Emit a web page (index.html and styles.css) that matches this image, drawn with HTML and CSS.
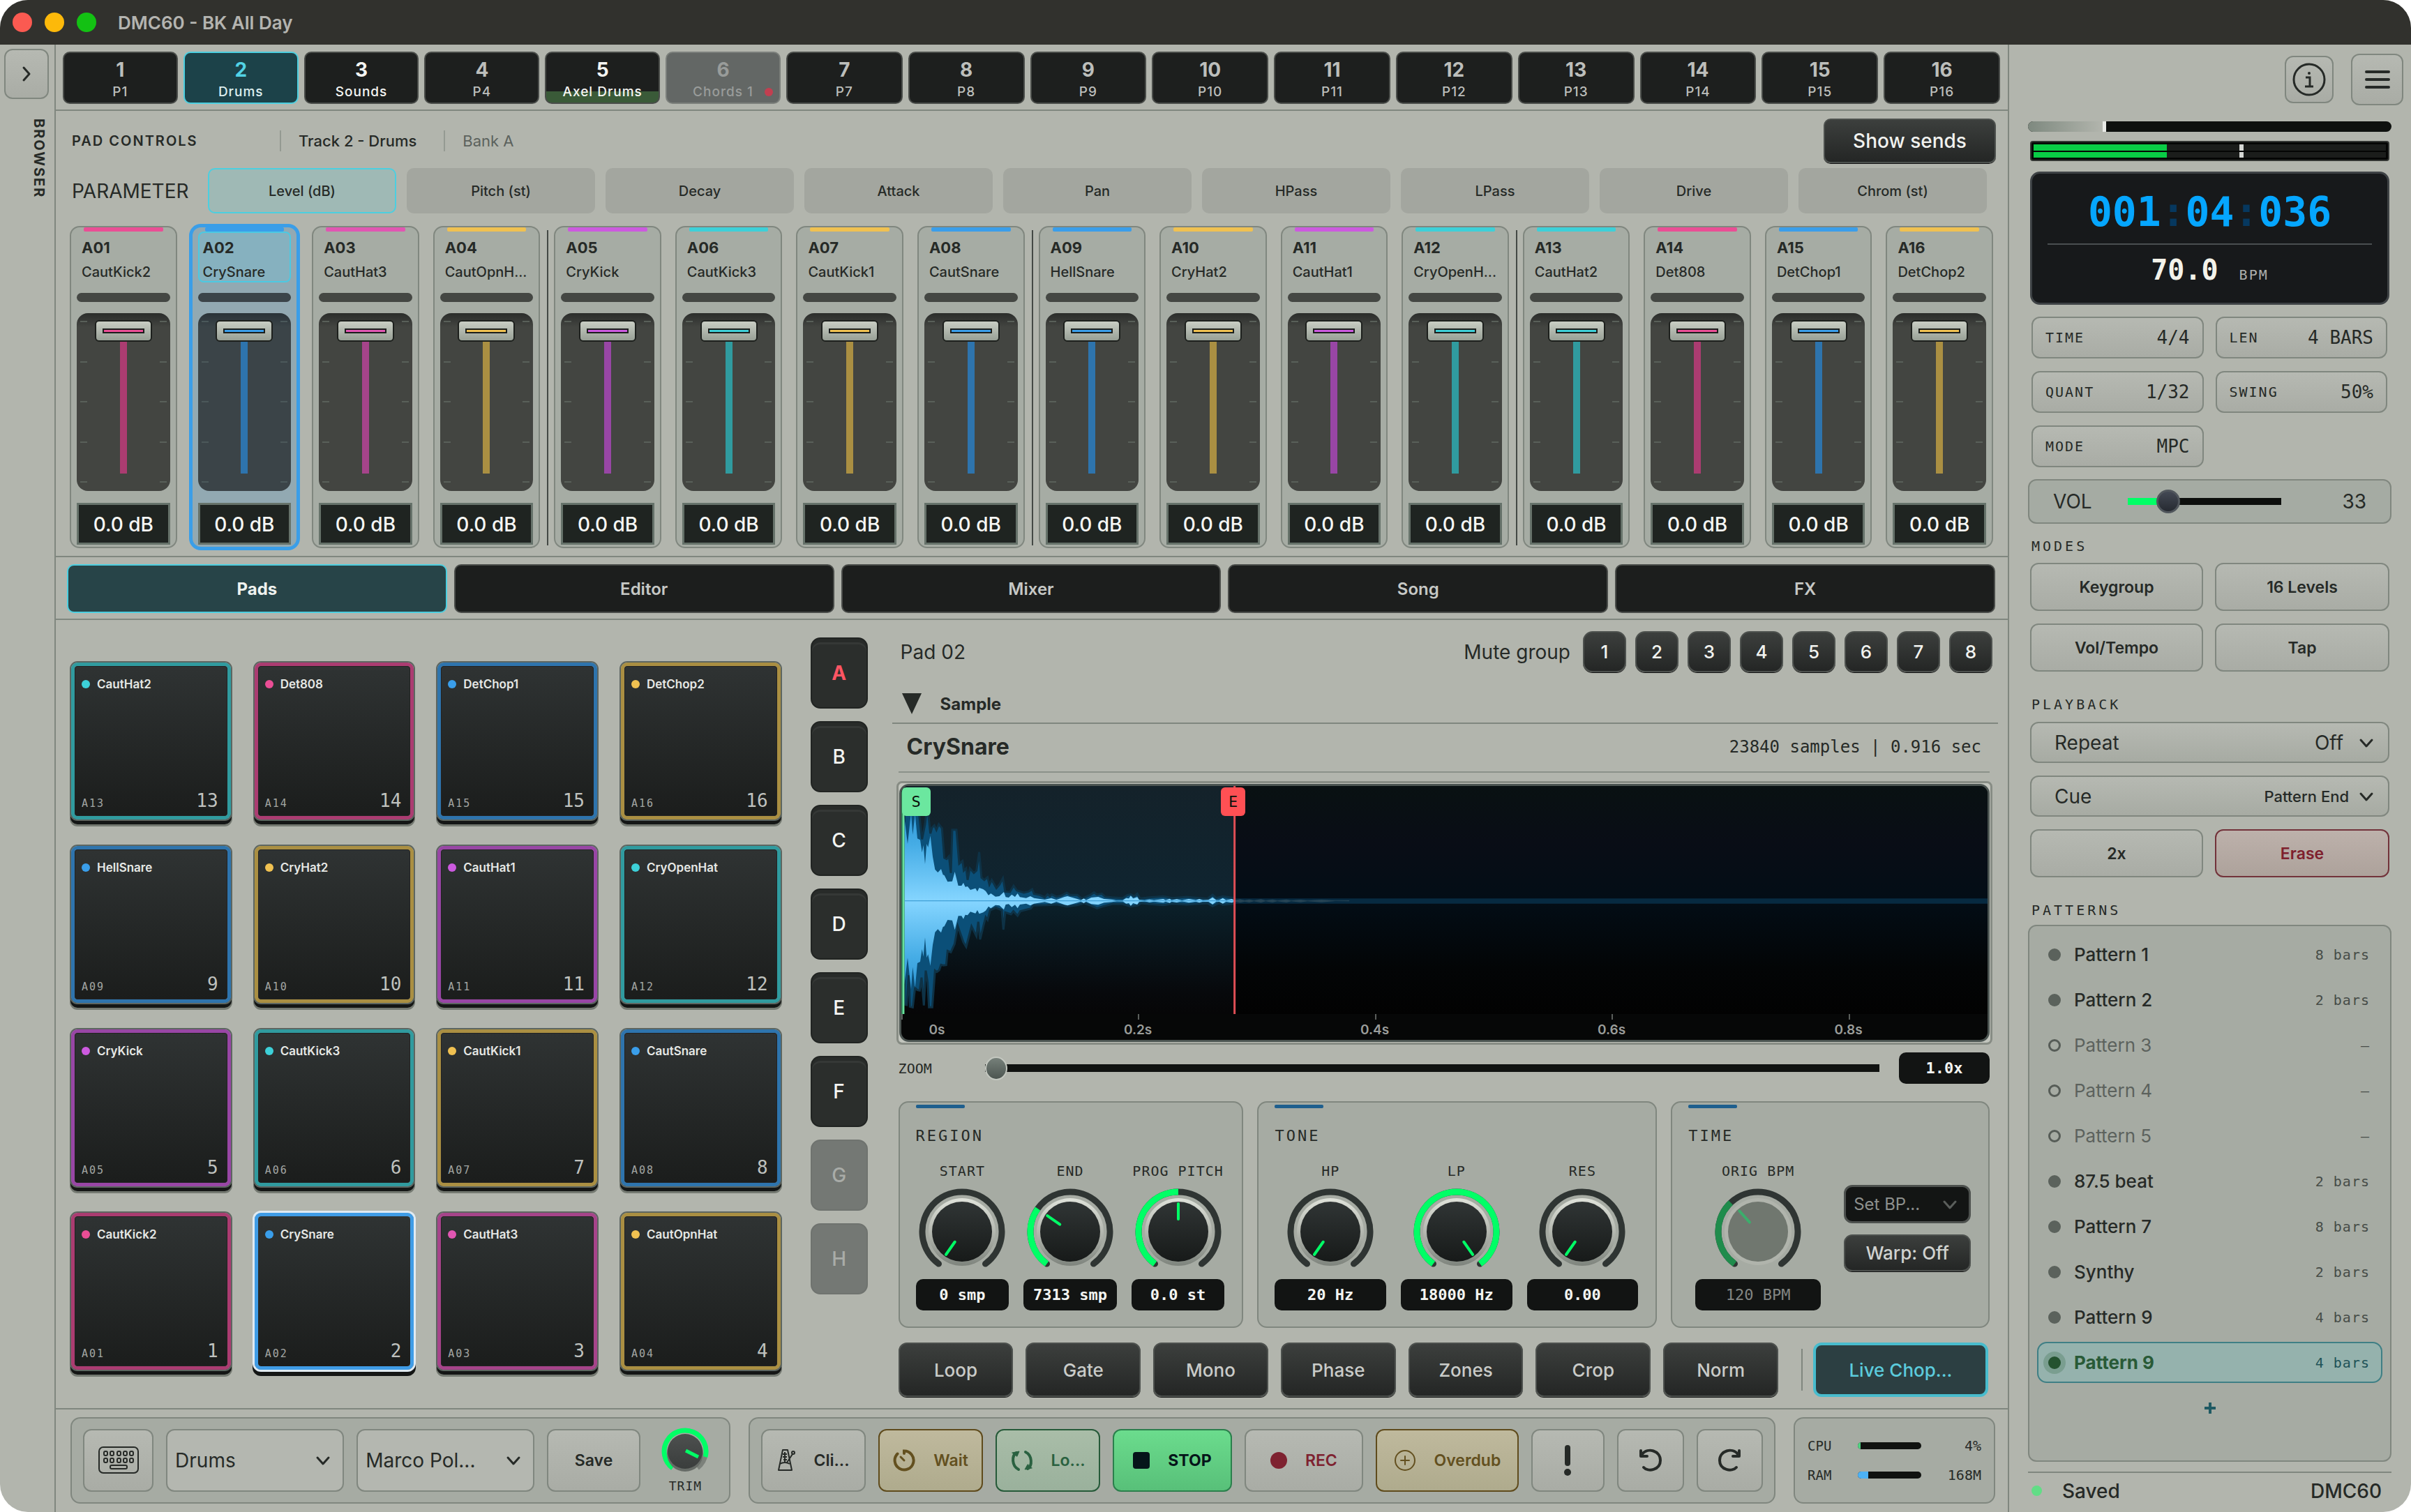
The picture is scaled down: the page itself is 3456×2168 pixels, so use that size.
FILE: index.html
```html
<!DOCTYPE html>
<html lang="en">
<head>
<meta charset="utf-8">
<title>DMC60 - BK All Day</title>
<meta name="viewport" content="width=device-width, initial-scale=1">
<link rel="stylesheet" href="styles.css">
</head>
<body>
<svg class="defs" aria-hidden="true">
  <defs>
    <linearGradient id="g-knob" x1="0" y1="0" x2="0" y2="1"><stop offset="0" stop-color="#303535"/><stop offset="1" stop-color="#171a19"/></linearGradient>
    <linearGradient id="g-ring" x1="0" y1="0" x2="0" y2="1"><stop offset="0" stop-color="#dfe2da"/><stop offset=".5" stop-color="#b4b8b0"/><stop offset="1" stop-color="#7f857e"/></linearGradient>
    <linearGradient id="g-trim" x1="0" y1="0" x2="0" y2="1"><stop offset="0" stop-color="#4d504f"/><stop offset="1" stop-color="#3a3d3c"/></linearGradient>
    <linearGradient id="g-wave" gradientUnits="userSpaceOnUse" x1="0" y1="160" x2="0" y2="530"><stop offset="0" stop-color="#2f97d6"/><stop offset=".35" stop-color="#46ade6"/><stop offset="1" stop-color="#85d5ff"/></linearGradient>
    <linearGradient id="g-in" x1="0" y1="0" x2="0" y2="1"><stop offset="0" stop-color="#14222a"/><stop offset=".49" stop-color="#0f2430"/><stop offset=".52" stop-color="#0b202a"/><stop offset=".9" stop-color="#07090c"/><stop offset="1" stop-color="#060607"/></linearGradient>
    <linearGradient id="g-out" x1="0" y1="0" x2="0" y2="1"><stop offset="0" stop-color="#091112"/><stop offset=".25" stop-color="#090d16"/><stop offset=".5" stop-color="#030d16"/><stop offset=".8" stop-color="#030506"/><stop offset="1" stop-color="#020202"/></linearGradient>
    <path id="arc" d="M-33.5 46.1A57 57 0 1 1 33.5 46.1" pathLength="100" fill="none" stroke-width="9"/>
    <g id="knob">
      <use href="#arc" stroke="#2f3533" stroke-linecap="round"/>
      <circle cy="2" r="47" fill="#80857e"/>
      <circle r="48" fill="url(#g-ring)"/>
      <circle r="43" fill="url(#g-knob)"/>
    </g>
    <path id="chev" d="M3 7l8 9 8-9" fill="none" stroke="currentColor" stroke-width="3" stroke-linecap="round" stroke-linejoin="round"/>
  </defs>
</svg>

<div class="window">
  <header class="titlebar">
    <button class="light red" aria-label="Close"></button>
    <button class="light amber" aria-label="Minimise"></button>
    <button class="light green" aria-label="Zoom"></button>
    <h1>DMC60 - BK All Day</h1>
  </header>

  <div class="layout">
    <aside class="browser">
      <button class="key expand" aria-label="Open browser"><svg width="16" height="24" viewBox="0 0 16 24"><path d="M4 3l8 9-8 9" fill="none" stroke="currentColor" stroke-width="3" stroke-linecap="round" stroke-linejoin="round"/></svg></button>
      <span class="browser-label">BROWSER</span>
    </aside>

    <main class="center">
      <nav class="tracks" aria-label="Tracks">
        <button><b>1</b><span>P1</span></button>
        <button class="active"><b>2</b><span>Drums</span></button>
        <button class="used"><b>3</b><span>Sounds</span></button>
        <button><b>4</b><span>P4</span></button>
        <button class="used playing"><b>5</b><span>Axel Drums</span></button>
        <button class="muted"><b>6</b><span>Chords 1</span></button>
        <button><b>7</b><span>P7</span></button>
        <button><b>8</b><span>P8</span></button>
        <button><b>9</b><span>P9</span></button>
        <button><b>10</b><span>P10</span></button>
        <button><b>11</b><span>P11</span></button>
        <button><b>12</b><span>P12</span></button>
        <button><b>13</b><span>P13</span></button>
        <button><b>14</b><span>P14</span></button>
        <button><b>15</b><span>P15</span></button>
        <button><b>16</b><span>P16</span></button>
      </nav>

      <section class="controls">
        <div class="controls-head">
          <h2>PAD CONTROLS</h2>
          <span class="crumb strong">Track 2 - Drums</span>
          <span class="crumb">Bank A</span>
          <button class="dark sends">Show sends</button>
        </div>
        <div class="params">
          <span class="params-label">PARAMETER</span>
          <button class="active">Level (dB)</button><button>Pitch (st)</button><button>Decay</button><button>Attack</button><button>Pan</button><button>HPass</button><button>LPass</button><button>Drive</button><button>Chrom (st)</button>
        </div>
        <ul class="strips">
          <li class="strip pink"><i class="tint"></i><div class="strip-head"><b>A01</b><span>CautKick2</span></div><i class="signal"></i><div class="fader"><input type="range" value="100" aria-label="A01 level"></div><input class="db" value="0.0 dB" aria-label="A01 value"></li>
          <li class="strip blue selected"><i class="tint"></i><div class="strip-head"><b>A02</b><span>CrySnare</span></div><i class="signal"></i><div class="fader"><input type="range" value="100" aria-label="A02 level"></div><input class="db" value="0.0 dB" aria-label="A02 value"></li>
          <li class="strip rose"><i class="tint"></i><div class="strip-head"><b>A03</b><span>CautHat3</span></div><i class="signal"></i><div class="fader"><input type="range" value="100" aria-label="A03 level"></div><input class="db" value="0.0 dB" aria-label="A03 value"></li>
          <li class="strip gold"><i class="tint"></i><div class="strip-head"><b>A04</b><span>CautOpnH...</span></div><i class="signal"></i><div class="fader"><input type="range" value="100" aria-label="A04 level"></div><input class="db" value="0.0 dB" aria-label="A04 value"></li>
          <li class="strip violet"><i class="tint"></i><div class="strip-head"><b>A05</b><span>CryKick</span></div><i class="signal"></i><div class="fader"><input type="range" value="100" aria-label="A05 level"></div><input class="db" value="0.0 dB" aria-label="A05 value"></li>
          <li class="strip cyan"><i class="tint"></i><div class="strip-head"><b>A06</b><span>CautKick3</span></div><i class="signal"></i><div class="fader"><input type="range" value="100" aria-label="A06 level"></div><input class="db" value="0.0 dB" aria-label="A06 value"></li>
          <li class="strip gold"><i class="tint"></i><div class="strip-head"><b>A07</b><span>CautKick1</span></div><i class="signal"></i><div class="fader"><input type="range" value="100" aria-label="A07 level"></div><input class="db" value="0.0 dB" aria-label="A07 value"></li>
          <li class="strip blue"><i class="tint"></i><div class="strip-head"><b>A08</b><span>CautSnare</span></div><i class="signal"></i><div class="fader"><input type="range" value="100" aria-label="A08 level"></div><input class="db" value="0.0 dB" aria-label="A08 value"></li>
          <li class="strip blue"><i class="tint"></i><div class="strip-head"><b>A09</b><span>HellSnare</span></div><i class="signal"></i><div class="fader"><input type="range" value="100" aria-label="A09 level"></div><input class="db" value="0.0 dB" aria-label="A09 value"></li>
          <li class="strip gold"><i class="tint"></i><div class="strip-head"><b>A10</b><span>CryHat2</span></div><i class="signal"></i><div class="fader"><input type="range" value="100" aria-label="A10 level"></div><input class="db" value="0.0 dB" aria-label="A10 value"></li>
          <li class="strip violet"><i class="tint"></i><div class="strip-head"><b>A11</b><span>CautHat1</span></div><i class="signal"></i><div class="fader"><input type="range" value="100" aria-label="A11 level"></div><input class="db" value="0.0 dB" aria-label="A11 value"></li>
          <li class="strip cyan"><i class="tint"></i><div class="strip-head"><b>A12</b><span>CryOpenH...</span></div><i class="signal"></i><div class="fader"><input type="range" value="100" aria-label="A12 level"></div><input class="db" value="0.0 dB" aria-label="A12 value"></li>
          <li class="strip cyan"><i class="tint"></i><div class="strip-head"><b>A13</b><span>CautHat2</span></div><i class="signal"></i><div class="fader"><input type="range" value="100" aria-label="A13 level"></div><input class="db" value="0.0 dB" aria-label="A13 value"></li>
          <li class="strip pink"><i class="tint"></i><div class="strip-head"><b>A14</b><span>Det808</span></div><i class="signal"></i><div class="fader"><input type="range" value="100" aria-label="A14 level"></div><input class="db" value="0.0 dB" aria-label="A14 value"></li>
          <li class="strip blue"><i class="tint"></i><div class="strip-head"><b>A15</b><span>DetChop1</span></div><i class="signal"></i><div class="fader"><input type="range" value="100" aria-label="A15 level"></div><input class="db" value="0.0 dB" aria-label="A15 value"></li>
          <li class="strip gold"><i class="tint"></i><div class="strip-head"><b>A16</b><span>DetChop2</span></div><i class="signal"></i><div class="fader"><input type="range" value="100" aria-label="A16 level"></div><input class="db" value="0.0 dB" aria-label="A16 value"></li>
        </ul>
      </section>

      <nav class="views" aria-label="Views">
        <button class="active">Pads</button><button>Editor</button><button>Mixer</button><button>Song</button><button>FX</button>
      </nav>

      <div class="workspace">
        <section class="pads" aria-label="Pads">
          <button class="pad cyan"><span class="pad-name">CautHat2</span><span class="pad-id">A13</span><span class="pad-no">13</span></button>
          <button class="pad pink"><span class="pad-name">Det808</span><span class="pad-id">A14</span><span class="pad-no">14</span></button>
          <button class="pad blue"><span class="pad-name">DetChop1</span><span class="pad-id">A15</span><span class="pad-no">15</span></button>
          <button class="pad gold"><span class="pad-name">DetChop2</span><span class="pad-id">A16</span><span class="pad-no">16</span></button>
          <button class="pad blue"><span class="pad-name">HellSnare</span><span class="pad-id">A09</span><span class="pad-no">9</span></button>
          <button class="pad gold"><span class="pad-name">CryHat2</span><span class="pad-id">A10</span><span class="pad-no">10</span></button>
          <button class="pad violet"><span class="pad-name">CautHat1</span><span class="pad-id">A11</span><span class="pad-no">11</span></button>
          <button class="pad cyan"><span class="pad-name">CryOpenHat</span><span class="pad-id">A12</span><span class="pad-no">12</span></button>
          <button class="pad violet"><span class="pad-name">CryKick</span><span class="pad-id">A05</span><span class="pad-no">5</span></button>
          <button class="pad cyan"><span class="pad-name">CautKick3</span><span class="pad-id">A06</span><span class="pad-no">6</span></button>
          <button class="pad gold"><span class="pad-name">CautKick1</span><span class="pad-id">A07</span><span class="pad-no">7</span></button>
          <button class="pad blue"><span class="pad-name">CautSnare</span><span class="pad-id">A08</span><span class="pad-no">8</span></button>
          <button class="pad pink"><span class="pad-name">CautKick2</span><span class="pad-id">A01</span><span class="pad-no">1</span></button>
          <button class="pad blue selected"><span class="pad-name">CrySnare</span><span class="pad-id">A02</span><span class="pad-no">2</span></button>
          <button class="pad rose"><span class="pad-name">CautHat3</span><span class="pad-id">A03</span><span class="pad-no">3</span></button>
          <button class="pad gold"><span class="pad-name">CautOpnHat</span><span class="pad-id">A04</span><span class="pad-no">4</span></button>
        </section>

        <nav class="banks" aria-label="Banks">
          <button class="active">A</button><button>B</button><button>C</button><button>D</button><button>E</button><button>F</button><button disabled>G</button><button disabled>H</button>
        </nav>

        <section class="detail">
          <div class="detail-head">
            <h2>Pad 02</h2>
            <span>Mute group</span>
            <div class="mutes"><button class="dark">1</button><button class="dark">2</button><button class="dark">3</button><button class="dark">4</button><button class="dark">5</button><button class="dark">6</button><button class="dark">7</button><button class="dark">8</button></div>
          </div>
          <button class="fold"><svg width="30" height="30" viewBox="0 0 30 30"><path d="M1 0h28L15 30z" fill="currentColor"/></svg>Sample</button>
          <div class="sample-head"><h3>CrySnare</h3><span>23840 samples | 0.916 sec</span></div>

          <div class="wave">
            <div class="wave-inner">
              <svg class="wave-plot" viewBox="33 36 4674 981" preserveAspectRatio="none" aria-label="Waveform">
                <rect x="33" y="36" width="4674" height="981" fill="url(#g-out)"/>
                <rect x="33" y="36" width="1434" height="981" fill="url(#g-in)"/>
                <path d="M46 520h4661v22H46z" fill="#0a3450" opacity=".75"/>
                <path fill="#0b4f78" stroke="#0e3246" stroke-width="9" d="M46 160L110 160 122 265 135 200 140 160 150 165 158 240 165 215 175 205 184 225 194 200 208 218 218 345 228 350 238 338 246 410 252 224 270 224 282 370 296 358 302 400 312 390 318 440 328 390 345 410 356 400 368 320 378 430 390 440 404 428 412 460 422 440 442 475 455 460 470 432 480 490 500 492 516 465 530 485 560 495 580 490 596 480 604 500 630 505 650 515 662 502 672 510 680 502 700 512 720 508 745 495 760 505 790 505 810 520 845 505 862 494 875 503 895 499 910 512 940 515 985 518 1005 505 1020 502 1035 510 1048 499 1060 520 1100 515 1160 511 1200 518 1260 513 1350 521 1372 504 1388 518 1416 511 1465 518L1465 542 1416 547 1400 540 1372 553 1350 540 1260 546 1200 542 1160 548 1100 544 1065 540 1050 549 1020 554 985 544 940 544 900 554 875 562 850 551 820 540 790 548 745 554 700 545 660 548 600 550 590 563 545 575 533 594 515 575 505 588 480 580 472 654 465 570 440 560 415 570 404 612 396 600 388 630 372 696 364 620 356 682 335 640 322 690 312 728 300 708 276 640 262 716 246 751 232 745 226 806 214 808 204 805 196 828 186 836 178 830 166 988 152 988 146 880 138 830 130 980 120 860 112 916 102 914 92 905 82 988 70 985 65 850 56 978 46 976z"/>
                <path id="body" fill="url(#g-wave)" d="M46 532L46 170 60 285 75 150 82 245 92 155 102 262 114 268 122 322 128 290 135 372 142 285 148 300 158 250 168 340 178 395 190 408 204 393 212 418 218 420 232 448 252 446 263 405 278 465 292 465 300 452 308 470 318 468 330 483 352 476 360 490 368 474 385 480 396 488 408 506 418 498 438 512 455 510 474 492 482 514 495 516 508 503 522 513 533 498 543 514 570 518 588 510 604 518 650 525 678 518 700 526 735 513 748 510 790 522 805 527 818 520 828 527 850 516 880 513 905 522 940 525 960 529 985 528 1000 518 1012 520 1020 508 1030 520 1048 514 1056 526 1080 528 1100 524 1120 527 1160 522 1170 527 1188 521 1195 527 1218 523 1240 528 1270 522 1300 527 1315 522 1330 527 1355 526 1372 515 1388 527 1400 527 1416 518 1430 527 1455 522 1465 527 1465 532z"/>
                <use href="#body" transform="translate(0 1060) scale(1 -1)"/>
                <path d="M46 530H1465" stroke="#3f9fd6" stroke-width="4"/>
                <path fill="#264455" d="M1470 528l20-5 20 5 20-4 20 5 30-6 20 6 30-5 20 5 40-5 20 5 40-4 30 4 60-4 60 4 60-1v4l-60-1-60 5-60-4-30 4-40-4-20 5-40-5-20 5-30-5-20 6-30-6-20 5-20-4-20 5-20-5z"/>
                <path d="M33 36h13v981H33z" fill="#2c7a52"/><path d="M38 36h8v981h-8z" fill="#69e09a"/>
                <path d="M1462 36h9v981h-9z" fill="#df4e55"/>
              </svg>
              <div class="axis">
                <i style="left:0%"></i><i style="left:21.8%"></i><i style="left:43.6%"></i><i style="left:65.4%"></i><i style="left:87.2%"></i>
                <span style="left:3.3%">0s</span><span style="left:21.8%">0.2s</span><span style="left:43.6%">0.4s</span><span style="left:65.4%">0.6s</span><span style="left:87.2%">0.8s</span>
              </div>
              <button class="marker start">S</button>
              <button class="marker end">E</button>
            </div>
          </div>

          <div class="zoom">
            <label for="zoom">ZOOM</label>
            <input id="zoom" type="range" value="0">
            <input class="readout" value="1.0x" aria-label="Zoom value">
          </div>

          <div class="panels">
            <section class="panel region">
              <h4>REGION</h4>
              <div class="knobs">
                <div class="knob"><label for="k1">START</label><svg viewBox="-64 -64 128 128"><use href="#knob"/><path d="M0-18V-40" class="needle" transform="rotate(-145)"/></svg><input id="k1" class="readout" value="0 smp"></div>
                <div class="knob"><label for="k2">END</label><svg viewBox="-64 -64 128 128"><use href="#knob"/><use href="#arc" class="level" stroke-dasharray="31 100"/><path d="M0-18V-40" class="needle" transform="rotate(-55)"/></svg><input id="k2" class="readout" value="7313 smp"></div>
                <div class="knob"><label for="k3">PROG PITCH</label><svg viewBox="-64 -64 128 128"><use href="#knob"/><use href="#arc" class="level" stroke-dasharray="50 100"/><path d="M0-18V-40" class="needle"/></svg><input id="k3" class="readout" value="0.0 st"></div>
              </div>
            </section>
            <section class="panel tone">
              <h4>TONE</h4>
              <div class="knobs">
                <div class="knob"><label for="k4">HP</label><svg viewBox="-64 -64 128 128"><use href="#knob"/><path d="M0-18V-40" class="needle" transform="rotate(-145)"/></svg><input id="k4" class="readout" value="20 Hz"></div>
                <div class="knob"><label for="k5">LP</label><svg viewBox="-64 -64 128 128"><use href="#knob"/><use href="#arc" class="level"/><path d="M0-18V-40" class="needle" transform="rotate(145)"/></svg><input id="k5" class="readout" value="18000 Hz"></div>
                <div class="knob"><label for="k6">RES</label><svg viewBox="-64 -64 128 128"><use href="#knob"/><path d="M0-18V-40" class="needle" transform="rotate(-145)"/></svg><input id="k6" class="readout" value="0.00"></div>
              </div>
            </section>
            <section class="panel time">
              <h4>TIME</h4>
              <div class="knobs">
                <div class="knob off"><label for="k7">ORIG BPM</label><svg viewBox="-64 -64 128 128"><use href="#arc" stroke="#2f3533" stroke-linecap="round"/><use href="#arc" class="level" stroke-dasharray="35 100"/><circle r="48" fill="#b0b4ac"/><circle r="43" class="cap"/><path d="M0-18V-40" class="needle" transform="rotate(-42)"/></svg><input id="k7" class="readout" value="120 BPM" disabled></div>
                <div class="warp">
                  <div class="select-dark"><select aria-label="Set BPM" disabled><option>Set BP...</option></select><svg width="22" height="22" viewBox="0 0 22 22"><use href="#chev"/></svg></div>
                  <button class="dark">Warp: Off</button>
                </div>
              </div>
            </section>
          </div>

          <div class="actions">
            <button class="dark">Loop</button><button class="dark">Gate</button><button class="dark">Mono</button><button class="dark">Phase</button><button class="dark">Zones</button><button class="dark">Crop</button><button class="dark">Norm</button>
            <button class="chop">Live Chop...</button>
          </div>
        </section>
      </div>

      <footer class="transport">
        <div class="group source">
          <button class="key" aria-label="Keyboard"><svg width="60" height="40" viewBox="0 0 60 40" fill="none" stroke="currentColor" stroke-width="2"><rect x="2" y="1" width="56" height="37" rx="6"/><g stroke-width="2"><rect x="9" y="7" width="5" height="6" rx="2"/><rect x="18" y="7" width="5" height="6" rx="2"/><rect x="28" y="7" width="5" height="6" rx="2"/><rect x="37" y="7" width="5" height="6" rx="2"/><rect x="46" y="7" width="5" height="6" rx="2"/><rect x="9" y="17" width="5" height="6" rx="2"/><rect x="18" y="17" width="5" height="6" rx="2"/><rect x="28" y="17" width="5" height="6" rx="2"/><rect x="37" y="17" width="5" height="6" rx="2"/><rect x="46" y="17" width="5" height="6" rx="2"/><rect x="18" y="27" width="24" height="5" rx="2"/></g></svg></button>
          <div class="pick"><select aria-label="Track"><option>Drums</option></select><svg width="22" height="22" viewBox="0 0 22 22"><use href="#chev"/></svg></div>
          <div class="pick"><select aria-label="Kit"><option>Marco Pol...</option></select><svg width="22" height="22" viewBox="0 0 22 22"><use href="#chev"/></svg></div>
          <button class="key save">Save</button>
          <div class="trim"><svg viewBox="-34 -34 68 68"><path d="M-18 24A30 30 0 1 1 18 24" fill="none" stroke="#7c817b" stroke-width="6"/><path d="M-18 24A30 30 0 1 1 29 8" fill="none" stroke="#00ff66" stroke-width="7"/><circle cy="3" r="26" fill="#666b66"/><circle r="25" fill="url(#g-trim)"/><path d="M1 -1L19 8" stroke="#00ff66" stroke-width="5"/></svg><span>TRIM</span></div>
        </div>
        <div class="group play">
          <button class="key w150"><svg width="26" height="32" viewBox="0 0 26 32" fill="none" stroke="currentColor" stroke-width="2" stroke-linejoin="round"><path d="M7 1h7l6 29H1zM3 21q7-4 14 0M10 4v15M7 7h6M7 11h6M8 15h5M13 19L21 7"/><circle cx="22" cy="5" r="2"/></svg>Cli...</button>
          <button class="key w150 amber"><svg width="32" height="32" viewBox="0 0 32 32" fill="none" stroke="currentColor" stroke-width="4" stroke-linecap="round"><path d="M16 6V2.500A13.500 13.500 0 1 1 6.500 6.500"/><path d="M11 11l5 5" stroke-width="3"/></svg>Wait</button>
          <button class="key w150 green"><svg width="32" height="32" viewBox="0 0 32 32" fill="none" stroke="currentColor" stroke-width="4" stroke-linecap="round"><path d="M11 29C1 24 1 9 8 5M21 4C31 9 31 24 24 28"/><path d="M2 5L12 3 9 10zM30 27L20 29 24 22z" fill="currentColor" stroke-width="1"/></svg>Lo...</button>
          <button class="key w170 stop"><svg width="24" height="24" viewBox="0 0 24 24"><rect width="24" height="24" rx="4" fill="currentColor"/></svg>STOP</button>
          <button class="key w170 rec"><svg width="24" height="24" viewBox="0 0 24 24"><circle cx="12" cy="12" r="12" fill="currentColor"/></svg>REC</button>
          <button class="key w206 amber"><svg width="32" height="32" viewBox="0 0 32 32" fill="none" stroke="currentColor" stroke-width="2" stroke-linecap="round"><circle cx="16" cy="16" r="14"/><path d="M16 10v12M10 16h12"/></svg>Overdub</button>
          <button class="key w104" aria-label="Panic"><svg width="12" height="44" viewBox="0 0 12 44"><path d="M6 4v22" stroke="currentColor" stroke-width="8" stroke-linecap="round"/><circle cx="6" cy="39" r="5" fill="currentColor"/></svg></button>
          <button class="key w94" aria-label="Undo"><svg width="36" height="36" viewBox="0 0 36 36" fill="none" stroke="currentColor" stroke-width="4" stroke-linecap="round" stroke-linejoin="round"><path d="M6 9C14-1 32 4 32 18S14 35 8 28M4 4v8h9"/></svg></button>
          <button class="key w94" aria-label="Redo"><svg width="36" height="36" viewBox="0 0 36 36" fill="none" stroke="currentColor" stroke-width="4" stroke-linecap="round" stroke-linejoin="round"><path d="M30 9C22-1 4 4 4 18S22 35 28 28M32 4v8h-9"/></svg></button>
        </div>
        <div class="group stats">
          <div><span>CPU</span><i class="load"><i class="cpu"></i></i><b>4%</b></div>
          <div><span>RAM</span><i class="load"><i class="ram"></i></i><b>168M</b></div>
        </div>
      </footer>
    </main>

    <aside class="side">
      <div class="side-top">
        <button class="key info" aria-label="Info"><svg width="48" height="48" viewBox="0 0 48 48"><circle cx="24" cy="24" r="22" fill="none" stroke="currentColor" stroke-width="3"/><circle cx="24" cy="15" r="2" fill="currentColor"/><path d="M19 21h6v12M18 34h12" fill="none" stroke="currentColor" stroke-width="3"/></svg></button>
        <button class="key menu" aria-label="Menu"><svg width="36" height="28" viewBox="0 0 36 28"><path d="M2 3h32M2 14h32M2 25h32" stroke="currentColor" stroke-width="4" stroke-linecap="round"/></svg></button>
      </div>
      <div class="position"><i></i></div>
      <div class="meter"><i></i><i></i></div>
      <div class="display">
        <div class="clock">001<em>:</em>04<em>:</em>036</div>
        <div class="tempo"><b>70.0</b><span>BPM</span></div>
      </div>
      <div class="fields">
        <button class="key"><span>TIME</span><b>4/4</b></button>
        <button class="key"><span>LEN</span><b>4 BARS</b></button>
        <button class="key"><span>QUANT</span><b>1/32</b></button>
        <button class="key"><span>SWING</span><b>50%</b></button>
        <button class="key"><span>MODE</span><b>MPC</b></button>
      </div>
      <div class="volume"><label for="vol">VOL</label><input id="vol" type="range" value="22"><output for="vol">33</output></div>

      <h5>MODES</h5>
      <div class="duo">
        <button class="key">Keygroup</button><button class="key">16 Levels</button>
        <button class="key">Vol/Tempo</button><button class="key">Tap</button>
      </div>

      <h5 class="playback">PLAYBACK</h5>
      <div class="choice"><label for="repeat">Repeat</label><select id="repeat"><option>Off</option></select><svg width="22" height="22" viewBox="0 0 22 22"><use href="#chev"/></svg></div>
      <div class="choice small"><label for="cue">Cue</label><select id="cue"><option>Pattern End</option></select><svg width="22" height="22" viewBox="0 0 22 22"><use href="#chev"/></svg></div>
      <div class="duo"><button class="key">2x</button><button class="key erase">Erase</button></div>

      <h5 class="patterns-label">PATTERNS</h5>
      <div class="patterns">
        <button><i></i><span>Pattern 1</span><b>8 bars</b></button>
        <button><i></i><span>Pattern 2</span><b>2 bars</b></button>
        <button class="empty"><i></i><span>Pattern 3</span><b>–</b></button>
        <button class="empty"><i></i><span>Pattern 4</span><b>–</b></button>
        <button class="empty"><i></i><span>Pattern 5</span><b>–</b></button>
        <button><i></i><span>87.5 beat</span><b>2 bars</b></button>
        <button><i></i><span>Pattern 7</span><b>8 bars</b></button>
        <button><i></i><span>Synthy</span><b>2 bars</b></button>
        <button><i></i><span>Pattern 9</span><b>4 bars</b></button>
        <button class="active"><i></i><span>Pattern 9</span><b>4 bars</b></button>
        <button class="add" aria-label="Add pattern"><svg width="18" height="18" viewBox="0 0 18 18"><path d="M9 1v16M1 9h16" stroke="currentColor" stroke-width="4"/></svg></button>
      </div>
      <div class="status"><i></i><span>Saved</span><span>DMC60</span></div>
    </aside>
  </div>
</div>
</body>
</html>
```

FILE: styles.css
```css
:root {
  --bg: #b2b5ad;
  --panel: #a6aba3;
  --line: #80877f;
  --ink: #262a27;
  --soft: #5c625d;
  --teal: #4ccfe0;
  --green: #00ff66;
  --sans: Inter, "Liberation Sans", sans-serif;
  --mono: "DejaVu Sans Mono", "Liberation Mono", monospace;
}

* { box-sizing: border-box; }

body {
  margin: 0;
  background: #fff;
  color: var(--ink);
  font-family: var(--sans);
  font-size: 28px;
}

h1, h2, h3, h4, h5, ul { margin: 0; padding: 0; font-weight: 500; list-style: none; }
i, em { font-style: normal; }
button, input, select { margin: 0; padding: 0; border: 0; font-family: inherit; font-size: inherit; color: inherit; background: none; min-width: 0; }
button, select { cursor: pointer; }
select { appearance: none; opacity: 1; outline: 0; }
svg { display: block; flex: none; }
.defs { position: absolute; width: 0; height: 0; }

.pink { --c: #ea4e95; --s: #ab3c71; }
.blue { --c: #3a9eea; --s: #2e74ad; }
.rose { --c: #e156b2; --s: #a6448a; }
.gold { --c: #f0c151; --s: #aa8f42; }
.violet { --c: #cc5adf; --s: #9846a5; }
.cyan { --c: #3dd0d8; --s: #309b9f; }

/* Window */
.window {
  display: flex;
  flex-direction: column;
  min-height: 100vh;
  overflow: hidden;
  border-radius: 40px;
  background: var(--bg);
}
.titlebar { display: flex; align-items: center; gap: 18px; height: 64px; padding-left: 18px; background: #31312d; }
.titlebar h1 { margin-left: 13px; font-size: 26px; font-weight: 600; color: #b4b4b0; }
.light { width: 28px; height: 28px; border-radius: 50%; }
.light.red { background: #fb5a51; }
.light.amber { background: #fdb90a; }
.light.green { background: #13c113; }
.layout { flex: 1; display: grid; grid-template-columns: 80px minmax(0, 1fr) 578px; }

.key {
  display: flex;
  align-items: center;
  justify-content: center;
  border: 2px solid var(--line);
  border-radius: 12px;
  background: linear-gradient(#b6b9b2, #a9aca5);
  font-size: 23px;
  font-weight: 500;
}
.dark {
  border: 2px solid #4d514e;
  border-radius: 10px;
  background: linear-gradient(#3c3f3d, #242625);
  box-shadow: 0 1px 0 #111;
  color: #f1f2ef;
  font-weight: 500;
}

/* Browser rail */
.browser { display: flex; flex-direction: column; align-items: flex-start; padding: 6px; border-right: 2px solid var(--line); }
.expand { width: 64px; height: 72px; }
.browser-label { margin: 28px 0 0 36px; writing-mode: vertical-rl; font-size: 20px; line-height: 28px; font-weight: 700; letter-spacing: 2px; }

/* Tracks */
.center { display: flex; flex-direction: column; min-width: 0; }
.tracks { display: grid; grid-template-columns: repeat(6, 165fr) repeat(10, 167fr); gap: 8px; padding: 10px 11px 8px 10px; border-bottom: 2px solid var(--line); }
.tracks button {
  position: relative;
  display: flex;
  flex-direction: column;
  align-items: center;
  height: 75px;
  padding-top: 8px;
  border: 2px solid #4a4d4a;
  border-radius: 10px;
  background: #1d1f1e;
  color: #bcbebb;
}
.tracks b { font-size: 28px; line-height: 32px; font-weight: 700; }
.tracks span { font-size: 19px; line-height: 32px; font-weight: 500; letter-spacing: 1px; }
.tracks .active { border-color: var(--teal); background: #1c4249; color: #dceeef; }
.tracks .active b { color: #52d3e6; }
.tracks .used { color: #f4f5f2; }
.tracks .playing { background: linear-gradient(#1d1f1e 77%, #3a5a38 77%); }
.tracks .muted { background: #636765; color: #999c9a; border-color: #7b7f7b; }
.tracks .muted::after { content: ""; position: absolute; right: 9px; bottom: 9px; width: 12px; height: 12px; border-radius: 50%; background: #c23f50; }

/* Pad controls */
.controls { padding: 11px 17px 11px 20px; border-bottom: 2px solid var(--line); }
.controls-head { display: flex; align-items: center; height: 64px; padding-left: 3px; }
.controls-head h2 { width: 298px; font-size: 20px; font-weight: 600; letter-spacing: 2px; }
.crumb { margin-right: 39px; padding-left: 25px; border-left: 2px solid #949a92; font-size: 22px; line-height: 30px; color: var(--soft); }
.crumb.strong { font-weight: 500; color: var(--ink); }
.sends { width: 247px; height: 64px; margin-left: auto; font-size: 28px; }
.params { display: grid; grid-template-columns: 180px repeat(9, minmax(0, 1fr)); gap: 15px; align-items: center; margin: 7px 13px 18px 3px; }
.params button { height: 65px; border: 2px solid transparent; border-radius: 10px; background: #a3a69f; font-size: 20px; font-weight: 500; }
.params .active { border-color: var(--teal); background: #9fb9b5; }
.strips { display: grid; grid-template-columns: repeat(16, minmax(0, 1fr)); gap: 20px; margin-right: 4px; }
.strip { position: relative; display: flex; flex-direction: column; padding: 0 8px 3px; border: 2px solid var(--line); border-radius: 14px; background: #a6aca4; }
.strip:nth-child(4n):not(:last-child)::after { content: ""; position: absolute; top: 4px; bottom: 2px; right: -14px; width: 2px; background: #444945; }
.tint { height: 6px; margin: 0 10px; border-radius: 2px; background: var(--c); }
.strip-head { display: flex; flex-direction: column; height: 73px; padding: 6px 0 0 5px; border: 2px solid transparent; border-radius: 8px; white-space: nowrap; }
.strip-head b { font-size: 22px; line-height: 30px; font-weight: 700; }
.strip-head span { margin-top: 6px; font-size: 20px; line-height: 28px; }
.signal { height: 13px; margin-top: 15px; border-radius: 7px; background: #444743; }
.fader {
  display: flex;
  justify-content: center;
  height: 255px;
  margin: 16px 0 17px;
  padding: 10px 5px 12px;
  border-radius: 16px;
  background:
    linear-gradient(#596059 0 0) 5px 11px / 10px 2px no-repeat,
    linear-gradient(#596059 0 0) 5px 69px / 10px 2px no-repeat,
    linear-gradient(#596059 0 0) 5px 126px / 10px 2px no-repeat,
    linear-gradient(#596059 0 0) 5px 184px / 10px 2px no-repeat,
    linear-gradient(#596059 0 0) 5px 241px / 10px 2px no-repeat,
    linear-gradient(#596059 0 0) right 5px top 11px / 10px 2px no-repeat,
    linear-gradient(#596059 0 0) right 5px top 69px / 10px 2px no-repeat,
    linear-gradient(#596059 0 0) right 5px top 126px / 10px 2px no-repeat,
    linear-gradient(#596059 0 0) right 5px top 184px / 10px 2px no-repeat,
    linear-gradient(#596059 0 0) right 5px top 241px / 10px 2px no-repeat,
    linear-gradient(#2b2d2b, #434541 20px);
}
.fader input {
  appearance: none;
  writing-mode: vertical-lr;
  direction: rtl;
  width: 82px;
  height: 220px;
  background: linear-gradient(var(--s) 0 0) center / 10px 100% no-repeat;
}
.fader input::-webkit-slider-thumb {
  appearance: none;
  width: 82px;
  height: 31px;
  border: 2px solid #1d201d;
  border-radius: 6px;
  background:
    linear-gradient(var(--c) 0 0) center / 56px 3px no-repeat,
    linear-gradient(#1b1e1c 0 0) center / 60px 7px no-repeat,
    linear-gradient(#c9cec4, #98a096);
}
.db { width: 100%; height: 60px; padding-top: 2px; border: 3px solid #66726a; background: #1f2421; color: #f6f7f4; font-size: 28px; font-weight: 500; text-align: center; }
.strip.selected { border-color: #3a9ee8; background: #92a9b2; box-shadow: 0 0 0 3px #3a9ee8; }
.selected .strip-head { border-color: #4cc9e2; background: #86b1bf; }
.selected .signal { background: #3b4449; }
.selected .fader { box-shadow: inset 0 0 0 200px rgba(40, 70, 95, .28); }

/* View tabs */
.views { display: grid; grid-template-columns: repeat(5, minmax(0, 1fr)); gap: 10px; padding: 10px 18px 8px 16px; border-bottom: 2px solid var(--line); }
.views button { height: 70px; border: 2px solid #4a4d4a; border-radius: 10px; background: #1c1e1d; color: #c6c8c5; font-size: 24px; font-weight: 600; }
.views .active { border-color: var(--teal); background: #274448; color: #eef2ef; font-weight: 700; }

/* Workspace */
.workspace { flex: 1; display: grid; grid-template-columns: minmax(0, 1023fr) 82px minmax(0, 1586fr); column-gap: 37px; align-items: start; padding: 0 14px 16px 20px; }
.pads { display: grid; grid-template-columns: repeat(4, minmax(0, 1fr)); gap: 38px 34px; padding: 61px 4px 0 2px; }
.pad {
  display: grid;
  grid-template-columns: 1fr auto;
  grid-template-rows: 1fr auto;
  align-items: baseline;
  height: 225px;
  padding: 15px 13px 7px 10px;
  border: 5px solid var(--s);
  border-radius: 9px;
  background: linear-gradient(#2f3333, #1b1d1c);
  background-clip: padding-box;
  box-shadow: inset 0 0 0 1px #222, 0 0 0 2px #5d6661, 0 6px 0 1px #141615, 0 8px 0 2px #747971;
  text-align: left;
}
.pad-name { grid-column: 1 / 3; display: flex; align-items: center; gap: 10px; font-size: 17px; line-height: 22px; font-weight: 600; color: #e6e8e5; }
.pad-name::before { content: ""; width: 12px; height: 12px; border-radius: 50%; background: var(--c); }
.pad-id { font-family: var(--mono); font-size: 15px; letter-spacing: 2px; color: #a3a6a3; }
.pad-no { font-family: var(--mono); font-size: 26px; line-height: 30px; color: #bfc1be; }
.pad.selected { border-color: #3f9ce6; box-shadow: 0 0 0 3px #dfeaf2, 0 6px 0 3px #141615; }
.banks { display: grid; gap: 18px; margin: 0 -2px 0 2px; padding-top: 25px; }
.banks button { height: 102px; border: 2px solid #212422; border-radius: 14px; background: #2b2e2c; box-shadow: inset 0 5px 0 #282b29, inset 0 8px 0 #353836; color: #f4f5f2; font-size: 28px; font-weight: 500; }
.banks .active { color: #ff5563; font-weight: 700; }
.banks button:disabled { border-color: #6f736f; background: #747874; box-shadow: none; color: #a9aca8; }

/* Pad detail */
.detail { display: flex; flex-direction: column; min-width: 0; }
.detail-head { display: flex; align-items: center; gap: 18px; height: 59px; margin: 16px 8px 0 12px; }
.detail-head h2 { flex: 1; font-size: 28px; font-weight: 400; }
.mutes { display: flex; gap: 13px; }
.mutes button { width: 62px; height: 59px; border-radius: 14px; font-size: 26px; }
.fold { display: flex; align-items: center; gap: 26px; height: 74px; padding: 18px 0 0 13px; border-bottom: 2px solid var(--line); font-size: 24px; font-weight: 700; }
.sample-head { display: flex; align-items: center; justify-content: space-between; height: 70px; margin: 0 12px 12px 9px; padding: 0 12px 3px 12px; border-bottom: 2px solid #8b9189; }
.sample-head h3 { font-size: 32px; font-weight: 700; }
.sample-head span { font-family: var(--mono); font-size: 24px; }
.wave { margin: 0 8px 0 6px; padding: 1px; border: 3px solid #878c84; border-radius: 8px; background: #c2c5bd; }
.wave-inner { position: relative; overflow: hidden; border: 3px solid #4b5451; border-radius: 14px; background: #060707; }
.wave-plot { width: 100%; height: 327px; }
.axis { position: relative; height: 37px; font-size: 19px; font-weight: 600; color: #9a9d9a; }
.axis i { position: absolute; top: 0; width: 2px; height: 8px; background: #5a5e5b; }
.axis span { position: absolute; top: 11px; line-height: 24px; transform: translateX(-50%); }
.marker { position: absolute; top: 2px; height: 41px; border-radius: 6px; color: #0b120d; font-family: var(--mono); font-size: 22px; }
.marker.start { left: 1px; width: 41px; background: #6be79f; }
.marker.end { left: 29%; width: 35px; margin-left: 7px; background: #ff5054; }
.zoom { display: flex; align-items: center; gap: 28px; height: 45px; margin: 11px 12px 25px 9px; }
.zoom label { width: 96px; font-family: var(--mono); font-size: 20px; }
.zoom input[type="range"] { flex: 1; appearance: none; height: 36px; background: linear-gradient(#111311 0 0) center / 100% 11px no-repeat; border-radius: 6px; }
.zoom input[type="range"]::-webkit-slider-thumb { appearance: none; width: 32px; height: 34px; border: 2px solid #c4c8c0; border-radius: 50%; background: linear-gradient(#76807a, #4c5550); }
.readout { width: 100%; height: 45px; border-radius: 10px; background: #121413; color: #f3f4f1; font-family: var(--mono); font-size: 22px; font-weight: 700; text-align: center; }
.zoom .readout { width: 130px; }

.panels { display: grid; grid-template-columns: 495fr 573fr 457fr; gap: 20px; margin: 0 12px 0 9px; }
.panel { padding: 3px 25px 23px 23px; border: 2px solid var(--line); border-radius: 14px; background: var(--panel); }
.panel::before { content: ""; display: block; width: 70px; height: 5px; border-radius: 2px; background: #1f5f8e; }
.panel h4 { margin-top: 26px; font-family: var(--mono); font-size: 22px; line-height: 28px; font-weight: 400; letter-spacing: 3px; }
.knobs { display: flex; gap: 21px; margin-top: 24px; }
.knob { flex: 1 1 0; min-width: 0; display: flex; flex-direction: column; align-items: center; }
.knob label { font-family: var(--mono); font-size: 20px; line-height: 24px; letter-spacing: 1px; white-space: nowrap; }
.knob svg { width: 128px; height: 128px; margin: 11px 0 4px; }
.needle { fill: none; stroke: var(--green); stroke-width: 4; stroke-linecap: round; }
.level { stroke: var(--green); stroke-linecap: butt; }
.time .knobs { gap: 33px; padding-left: 10px; }
.knob.off { flex: 0 0 180px; }
.off .level { stroke: #1f8c4c; }
.off .needle { stroke: #3cae6c; }
.off .cap { fill: #70776f; }
.off .readout { color: #838683; font-weight: 400; }
.warp { flex: 1; display: flex; flex-direction: column; gap: 16px; padding-top: 32px; }
.warp button { height: 53px; border-radius: 12px; font-size: 26px; color: #d0d2cf; }
.select-dark { display: flex; align-items: center; height: 55px; padding: 0 16px 0 11px; border: 3px solid #4d514e; border-radius: 12px; background: #131514; color: #8d908d; }
.select-dark select { flex: 1; font-size: 24px; color: #8d908d; }
.select-dark svg { color: #5a5e5b; }

.actions { display: flex; gap: 18px; margin: 21px 14px 0 9px; }
.actions .dark { flex: 1; height: 78px; border-radius: 12px; font-size: 26px; color: #c9cbc8; }
.chop { position: relative; flex: 0 0 251px; margin-left: 32px; border: 4px solid #48bccd; border-radius: 12px; background: #2c3f42; color: #5bcbdc; font-size: 26px; font-weight: 500; }
.chop::before { content: ""; position: absolute; left: -21px; top: 5px; bottom: 5px; width: 2px; background: var(--line); }

/* Transport */
.transport { display: grid; grid-template-columns: 946fr 1472fr 289fr; gap: 26px; padding: 11px 18px 12px 21px; border-top: 2px solid var(--line); }
.group { display: flex; align-items: center; gap: 18px; height: 124px; padding: 0 16px; border: 2px solid var(--line); border-radius: 14px; background: var(--panel); }
.group .key { height: 90px; gap: 26px; font-weight: 600; }
.source .key { flex: 99 1 0; }
.source .save { flex: 132 1 0; }
.pick { position: relative; display: flex; flex: 256 1 0; height: 90px; border: 2px solid var(--line); border-radius: 12px; background: #b4b7b0; }
.pick select { flex: 1; padding-left: 11px; }
.pick svg { position: absolute; right: 17px; top: 32px; pointer-events: none; }
.trim { flex: 95 1 0; display: flex; flex-direction: column; align-items: center; gap: 6px; }
.trim svg { width: 68px; height: 68px; }
.trim span { font-family: var(--mono); font-size: 18px; line-height: 20px; letter-spacing: 1px; }
.w150 { flex: 150 1 0; }
.w170 { flex: 171 1 0; }
.w206 { flex: 206 1 0; }
.w104 { flex: 104 1 0; }
.w94 { flex: 94 1 0; }
.key.amber { border-color: #5f4b1c; background: linear-gradient(#bfb99d, #afab8d); color: #63501f; }
.key.green { border-color: #265a39; background: linear-gradient(#a9bda8, #9ab19c); color: #2a6140; }
.key.stop { border-color: #2b7f4c; background: linear-gradient(#6bdc8d, #58c079); color: #06151a; font-weight: 700; }
.key.rec { color: #7e2230; }
.group.stats { flex-direction: column; align-items: stretch; justify-content: center; gap: 18px; padding: 0 18px; }
.stats div { display: flex; align-items: center; font-family: var(--mono); font-size: 20px; line-height: 24px; }
.stats span { width: 72px; font-size: 19px; }
.load { display: flex; width: 91px; height: 10px; overflow: hidden; border-radius: 5px; background: #101210; }
.cpu { width: 4px; background: #4fd07f; }
.ram { width: 15px; background: #4db2f5; }
.stats b { margin-left: auto; font-weight: 400; }

/* Side panel */
.side { display: flex; flex-direction: column; padding: 13px 28px 0 27px; border-left: 2px solid var(--line); }
.side-top { display: flex; align-items: center; justify-content: flex-end; gap: 25px; margin-right: -17px; }
.info { width: 70px; height: 68px; }
.menu { width: 75px; height: 74px; }
.position { display: flex; height: 15px; margin-top: 23px; border-radius: 8px; overflow: hidden; background: #0e100e; }
.position i { width: 112px; border-right: 5px solid #e8eae6; background: linear-gradient(90deg, #7e897f, #b2b5ad); }
.meter { display: grid; gap: 2px; height: 29px; margin: 13px 3px 15px; padding: 3px; border: 2px solid #333633; border-radius: 4px; background: #050605; }
.meter i {
  background:
    linear-gradient(#d5d7d4 0 0) 295px 0 / 6px 100% no-repeat,
    linear-gradient(90deg, #09cc45 191px, #1b1d1b 191px);
}
.display { height: 191px; margin: 0 3px; padding: 12px 22px 0; border: 3px solid #3e4245; border-radius: 14px; background: #17191b; text-align: center; font-family: var(--mono); }
.clock { height: 90px; border-bottom: 2px solid #4a4e50; color: #05a6ff; font-size: 58px; line-height: 86px; font-weight: 700; }
.clock em { color: #06385f; }
.tempo { display: flex; align-items: baseline; justify-content: center; gap: 30px; color: #f3f2ea; line-height: 72px; }
.tempo b { font-size: 40px; }
.tempo span { font-size: 20px; letter-spacing: 2px; color: #aeb0ad; }
.fields { display: grid; grid-template-columns: 1fr 1fr; gap: 18px 17px; margin: 17px 6px 17px 5px; font-family: var(--mono); }
.fields .key { justify-content: space-between; height: 60px; padding: 0 18px; font-family: var(--mono); }
.fields span { font-size: 20px; font-weight: 400; letter-spacing: 2px; }
.fields b { font-size: 26px; font-weight: 400; }
.volume { display: flex; align-items: center; height: 64px; padding: 0 34px; border: 2px solid var(--line); border-radius: 12px; background: #a5aba3; }
.volume label { width: 107px; }
.volume input {
  appearance: none;
  width: 220px;
  height: 36px;
  background:
    linear-gradient(90deg, var(--green) 26%, #0d0f0d 26%) center / 100% 10px no-repeat;
  border-radius: 5px;
}
.volume input::-webkit-slider-thumb { appearance: none; width: 34px; height: 34px; border: 3px solid #50565c; border-radius: 50%; background: linear-gradient(#434954, #262a31); }
.volume output { margin-left: auto; }
.side h5 { margin: 20px 0 12px 5px; font-family: var(--mono); font-size: 20px; line-height: 24px; font-weight: 400; letter-spacing: 4px; }
.duo { display: grid; grid-template-columns: 248fr 250fr; gap: 18px 17px; margin: 0 3px; }
.duo .key { height: 69px; font-weight: 600; }
.side .playback { margin: 35px 0 13px 5px; }
.choice { display: flex; align-items: center; height: 59px; margin: 0 3px 18px; padding: 0 20px 0 33px; border: 2px solid var(--line); border-radius: 12px; background: linear-gradient(#b6b9b2, #a7aba3); }
.choice select { flex: 1; margin-right: 22px; text-align-last: right; }
.choice.small select { margin-right: 14px; font-size: 22px; font-weight: 500; }
.key.erase { border-color: #72323a; background: linear-gradient(#bdb1ab, #ada29b); color: #7e202d; }
.side .patterns-label { margin: 35px 0 9px 5px; }
.patterns { flex: 1; display: flex; flex-direction: column; gap: 6px; padding: 11px; border: 2px solid var(--line); border-radius: 12px; background: var(--panel); }
.patterns button { display: flex; align-items: center; height: 59px; padding: 0 16px 0 14px; border: 2px solid transparent; border-radius: 14px; text-align: left; }
.patterns i { width: 18px; height: 18px; margin-right: 19px; border-radius: 50%; background: #5b625c; }
.patterns span { flex: 1; font-size: 26px; font-weight: 500; }
.patterns b { font-family: var(--mono); font-size: 20px; font-weight: 400; letter-spacing: 1px; color: #474d48; }
.patterns .empty { color: var(--soft); }
.patterns .empty i { border: 3px solid #565c57; background: none; }
.patterns .empty span { font-weight: 400; }
.patterns .active { border-color: #3f7f85; background: #95b2ad; color: #295a37; }
.patterns .active i { background: #24522f; box-shadow: 0 0 0 7px #7a9e90; }
.patterns .active span { font-weight: 700; }
.patterns .active b { color: #1f5358; }
.patterns .add { justify-content: center; padding: 0; height: 59px; color: #1f5a63; }
.status { display: flex; align-items: center; height: 58px; margin-top: 14px; padding: 0 14px 5px 5px; border-top: 2px solid var(--line); font-weight: 500; }
.status i { width: 15px; height: 15px; margin-right: 29px; border-radius: 50%; background: #62dd86; }
.status span + span { margin-left: auto; }
```
